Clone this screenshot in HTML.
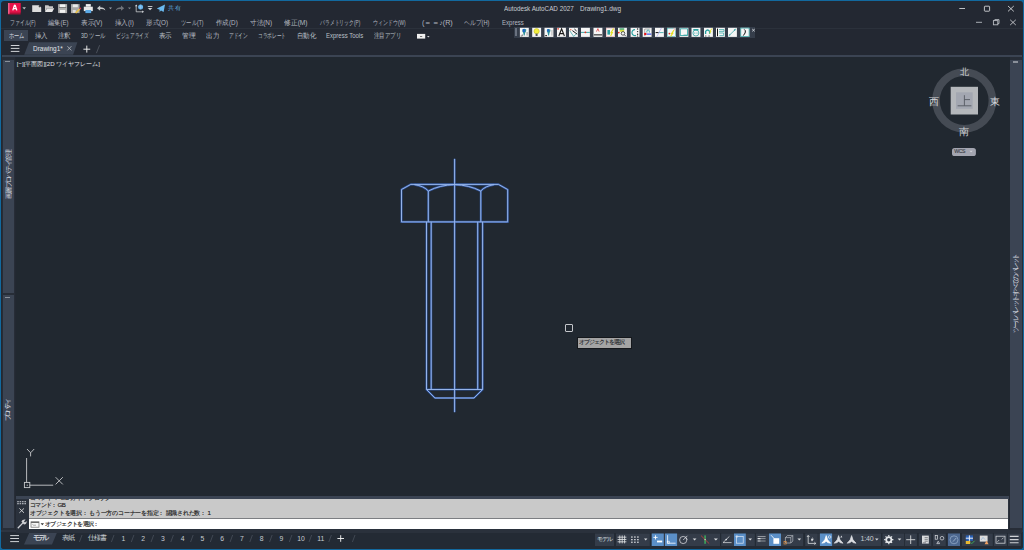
<!DOCTYPE html>
<html><head><meta charset="utf-8">
<style>
*{margin:0;padding:0;box-sizing:border-box}
html,body{width:1024px;height:550px;overflow:hidden;background:#12699f}
body{position:relative;font-family:"Liberation Sans",sans-serif;color:#c9ccd2}
.a{position:absolute}
.t{position:absolute;white-space:nowrap;line-height:1}
.mn{font-size:6.4px;color:#aeb2ba;top:20px;letter-spacing:-0.5px}
.rb{font-size:6.4px;color:#b4b8c0;top:32px;letter-spacing:-0.5px}
.vt{position:absolute;white-space:nowrap;line-height:1;font-size:6.2px;color:#d0d3d8;letter-spacing:-0.4px}
.cm{font-size:6px;color:#1e1e1e;letter-spacing:-0.3px}
svg{position:absolute;overflow:visible}
</style></head>
<body>

<div class="a" style="left:1px;top:1px;width:1022px;height:548px;background:#232832;border-radius:3px"></div>
<div class="a" style="left:1px;top:28px;width:1022px;height:1px;background:#2b313b"></div>
<svg style="left:0;top:0" width="200" height="18" viewBox="0 0 200 18">
<rect x="8" y="3" width="12.6" height="11.5" fill="#a80f35"/>
<rect x="8" y="3" width="12.6" height="9.6" fill="#e5134a"/>
<rect x="8" y="3" width="1.5" height="10.8" fill="#f0608a"/>
<path d="M12.8 10.4 L14.3 5.6 Q14.8 4.6 15.3 5.6 L16.8 10.4 M13.5 8.6 H16.1" stroke="#fff" stroke-width="1.3" fill="none" stroke-linejoin="round"/>
<path d="M22.4 7.2 H26 L24.2 9.4Z" fill="#b8bcc2"/>
<path d="M32.2 5.2 H38.8 L41.2 7.6 V12 H32.2Z" fill="#dcdcdc"/>
<circle cx="39.4" cy="6.6" r="0.8" fill="#444"/>
<path d="M45 5.2 H48.4 L49.2 6.2 H53 V8 H47 L45 12Z" fill="#c8c8c8"/>
<path d="M47 8.2 H54.2 L52.2 12 H45Z" fill="#e6e6e6"/>
<rect x="58.1" y="4.1" width="9" height="9" fill="#b0b0b0"/>
<rect x="60" y="4.4" width="5.2" height="2.8" fill="#f2f2f2"/>
<rect x="60" y="10" width="5.2" height="2.8" fill="#f2f2f2"/>
<rect x="59" y="7.4" width="7.2" height="0.6" fill="#555"/>
<rect x="71" y="4.1" width="8.6" height="9" fill="#a8a8a8"/>
<rect x="72.8" y="4.4" width="5" height="2.8" fill="#eaeaea"/>
<rect x="72.8" y="10" width="3" height="2.8" fill="#dcdcdc"/>
<path d="M75 12.4 L79 8.4 L80.3 9.6 L76.3 13.4Z" fill="#e8c24a"/>
<path d="M79 8.4 L80.2 7.2 L81.4 8.4 L80.3 9.6Z" fill="#d8334a"/>
<rect x="85.8" y="4.1" width="5" height="2.6" fill="#f0f0f0"/>
<rect x="83.8" y="6.7" width="9" height="4.4" fill="#e8e8e8"/>
<rect x="85.4" y="10" width="5.8" height="3.1" fill="#5aa9e6"/>
<path d="M97 8.2 L100.2 5.6 V7.2 Q104.6 7.2 105.4 10.4 Q103.6 8.8 100.2 9 V10.8Z" fill="#c8cacc"/>
<path d="M109 7.4 H112 L110.5 9.2Z" fill="#a0a4aa"/>
<path d="M124.2 8.2 L121 5.6 V7.2 Q116.6 7.2 115.8 10.4 Q117.6 8.8 121 9 V10.8Z" fill="#70747a"/>
<path d="M128 7.4 H131 L129.5 9.2Z" fill="#80848a"/>
<path d="M136.2 5.6 V11.8 H142.6" stroke="#dfe1e4" stroke-width="0.7" fill="none"/>
<path d="M135 6.2 L136.2 4.4 L137.4 6.2Z M142.2 10.6 L144 11.8 L142.2 13Z" fill="#dfe1e4"/>
<circle cx="140.6" cy="7" r="2.5" fill="#5fb0ec"/>
<path d="M138.4 7 H142.8 M140.6 4.6 V9.4" stroke="#b8dcf6" stroke-width="0.4" fill="none"/>
<rect x="147.8" y="6" width="4.6" height="0.9" fill="#d0d2d6"/>
<path d="M147.8 8 H152.4 L150.1 10.2Z" fill="#d0d2d6"/>
<path d="M156.8 8.6 L165 4.5 L163.6 12 L161 10.4 L159.6 12 L159.6 9.8Z" fill="#6ab9ef"/>
</svg>
<div class="t" style="left:167.8px;top:4.6px;font-size:6.4px;color:#5fa8dc;letter-spacing:0.712px;">共有</div>
<div class="t" style="left:503.8px;top:5px;font-size:7.2px;color:#c9ccd2;transform:scaleX(0.8757);transform-origin:0 0;">Autodesk AutoCAD 2027</div>
<div class="t" style="left:579.6px;top:5px;font-size:7.2px;color:#c9ccd2;transform:scaleX(0.9012);transform-origin:0 0;">Drawing1.dwg</div>
<svg style="left:940px;top:0" width="84" height="30" viewBox="0 0 84 30">
<path d="M19.3 8.5 H25" stroke="#d0d2d6" stroke-width="0.9"/>
<rect x="44.4" y="6.2" width="5.2" height="5" fill="none" stroke="#d0d2d6" stroke-width="0.9" rx="0.6"/>
<path d="M68 6 L73.8 11.4 M73.8 6 L68 11.4" stroke="#d0d2d6" stroke-width="0.9"/>
<path d="M36 22.3 H42" stroke="#b8bcc2" stroke-width="0.9"/>
<rect x="53.4" y="20.6" width="4.4" height="4.2" fill="none" stroke="#b8bcc2" stroke-width="0.9"/>
<path d="M54.8 20.6 V19.6 H59 V23.6 H57.8" fill="none" stroke="#b8bcc2" stroke-width="0.9"/>
<path d="M70.2 19.8 L75.8 25 M75.8 19.8 L70.2 25" stroke="#c8cace" stroke-width="0.9"/>
</svg>
<div class="t" style="left:10px;top:20.2px;font-size:6.8px;color:#b4b8c0;transform:scaleX(0.6999);transform-origin:0 0;">ファイル(F)</div>
<div class="t" style="left:48.2px;top:20.2px;font-size:6.8px;color:#b4b8c0;transform:scaleX(0.8891);transform-origin:0 0;">編集(E)</div>
<div class="t" style="left:81.4px;top:20.2px;font-size:6.8px;color:#b4b8c0;transform:scaleX(0.9293);transform-origin:0 0;">表示(V)</div>
<div class="t" style="left:114.6px;top:20.2px;font-size:6.8px;color:#b4b8c0;transform:scaleX(0.9270);transform-origin:0 0;">挿入(I)</div>
<div class="t" style="left:146.4px;top:20.2px;font-size:6.8px;color:#b4b8c0;transform:scaleX(0.9288);transform-origin:0 0;">形式(O)</div>
<div class="t" style="left:181px;top:20.2px;font-size:6.8px;color:#b4b8c0;transform:scaleX(0.7584);transform-origin:0 0;">ツール(T)</div>
<div class="t" style="left:215.6px;top:20.2px;font-size:6.8px;color:#b4b8c0;transform:scaleX(0.9272);transform-origin:0 0;">作成(D)</div>
<div class="t" style="left:250px;top:20.2px;font-size:6.8px;color:#b4b8c0;transform:scaleX(0.9447);transform-origin:0 0;">寸法(N)</div>
<div class="t" style="left:284.4px;top:20.2px;font-size:6.8px;color:#b4b8c0;transform:scaleX(0.9735);transform-origin:0 0;">修正(M)</div>
<div class="t" style="left:320.2px;top:20.2px;font-size:6.8px;color:#b4b8c0;transform:scaleX(0.6936);transform-origin:0 0;">パラメトリック(P)</div>
<div class="t" style="left:372.7px;top:20.2px;font-size:6.8px;color:#b4b8c0;transform:scaleX(0.7112);transform-origin:0 0;">ウィンドウ(W)</div>
<div class="t" style="left:421.5px;top:20.2px;font-size:6.8px;color:#b4b8c0;transform:scaleX(1.0552);transform-origin:0 0;">(＝＝♪(R)</div>
<div class="t" style="left:464.1px;top:20.2px;font-size:6.8px;color:#b4b8c0;transform:scaleX(0.8368);transform-origin:0 0;">ヘルプ(H)</div>
<div class="t" style="left:501.5px;top:20.2px;font-size:6.8px;color:#b4b8c0;transform:scaleX(0.8877);transform-origin:0 0;">Express</div>
<div class="a" style="left:4px;top:30px;width:24px;height:11px;background:#3b4453"></div>
<div class="t" style="left:8.8px;top:32.5px;font-size:6.8px;color:#dadde2;transform:scaleX(0.7382);transform-origin:0 0;">ホーム</div>
<div class="t" style="left:34.8px;top:32.5px;font-size:6.8px;color:#bcc0c8;transform:scaleX(0.9084);transform-origin:0 0;">挿入</div>
<div class="t" style="left:58px;top:32.5px;font-size:6.8px;color:#bcc0c8;transform:scaleX(0.9234);transform-origin:0 0;">注釈</div>
<div class="t" style="left:81px;top:32.5px;font-size:6.8px;color:#bcc0c8;transform:scaleX(0.7735);transform-origin:0 0;">3D ツール</div>
<div class="t" style="left:115.6px;top:32.5px;font-size:6.8px;color:#bcc0c8;transform:scaleX(0.6685);transform-origin:0 0;">ビジュアライズ</div>
<div class="t" style="left:158.9px;top:32.5px;font-size:6.8px;color:#bcc0c8;transform:scaleX(0.9234);transform-origin:0 0;">表示</div>
<div class="t" style="left:182px;top:32.5px;font-size:6.8px;color:#bcc0c8;transform:scaleX(0.9760);transform-origin:0 0;">管理</div>
<div class="t" style="left:205.5px;top:32.5px;font-size:6.8px;color:#bcc0c8;transform:scaleX(0.9384);transform-origin:0 0;">出力</div>
<div class="t" style="left:229px;top:32.5px;font-size:6.8px;color:#bcc0c8;transform:scaleX(0.6772);transform-origin:0 0;">アドイン</div>
<div class="t" style="left:258px;top:32.5px;font-size:6.8px;color:#bcc0c8;transform:scaleX(0.6655);transform-origin:0 0;">コラボレート</div>
<div class="t" style="left:296.6px;top:32.5px;font-size:6.8px;color:#bcc0c8;transform:scaleX(0.9252);transform-origin:0 0;">自動化</div>
<div class="t" style="left:326.3px;top:32.5px;font-size:6.8px;color:#bcc0c8;transform:scaleX(0.8818);transform-origin:0 0;">Express Tools</div>
<div class="t" style="left:373.9px;top:32.5px;font-size:6.8px;color:#bcc0c8;transform:scaleX(0.7809);transform-origin:0 0;">注目アプリ</div>
<svg style="left:410px;top:26px" width="30" height="16" viewBox="0 0 30 16">
<rect x="7" y="7.9" width="8.2" height="4.7" fill="#f0f0f0"/>
<rect x="10" y="10" width="2.2" height="0.8" fill="#555"/>
<path d="M17 10 H19.6 L18.3 11.5Z" fill="#d0d2d6"/>
</svg>
<div class="a" style="left:514px;top:26.9px;width:241px;height:10.9px;background:#353d4a"></div>
<div class="a" style="left:515.2px;top:28.2px;width:1.6px;height:8.2px;background:#6a7280"></div>
<svg style="left:0;top:0" width="1024" height="45" viewBox="0 0 1024 45"><rect x="519.9" y="27.8" width="8.9" height="9.1" fill="#f6f6f6"/><rect x="532.2" y="27.8" width="8.9" height="9.1" fill="#f6f6f6"/><rect x="544.5" y="27.8" width="8.9" height="9.1" fill="#f6f6f6"/><rect x="557" y="27.8" width="8.9" height="9.1" fill="#f6f6f6"/><rect x="569" y="27.8" width="8.9" height="9.1" fill="#f6f6f6"/><rect x="581" y="27.8" width="8.9" height="9.1" fill="#f6f6f6"/><rect x="593.5" y="27.8" width="8.9" height="9.1" fill="#f6f6f6"/><rect x="606" y="27.8" width="8.9" height="9.1" fill="#f6f6f6"/><rect x="618" y="27.8" width="8.9" height="9.1" fill="#f6f6f6"/><rect x="630.6" y="27.8" width="8.9" height="9.1" fill="#f6f6f6"/><rect x="642.7" y="27.8" width="8.9" height="9.1" fill="#f6f6f6"/><rect x="655" y="27.8" width="8.9" height="9.1" fill="#f6f6f6"/><rect x="667" y="27.8" width="8.9" height="9.1" fill="#f6f6f6"/><rect x="679.5" y="27.8" width="8.9" height="9.1" fill="#f6f6f6"/><rect x="691.5" y="27.8" width="8.9" height="9.1" fill="#f6f6f6"/><rect x="704" y="27.8" width="8.9" height="9.1" fill="#f6f6f6"/><rect x="716" y="27.8" width="8.9" height="9.1" fill="#f6f6f6"/><rect x="728" y="27.8" width="8.9" height="9.1" fill="#f6f6f6"/><rect x="740.5" y="27.8" width="8.9" height="9.1" fill="#f6f6f6"/><path d="M522.3 29.4 Q524.3 28 526.3 29.6 Q526.5 31.6 525.1 33 L524.6999999999999 35.6 H523.6999999999999 L523.3 33 Q521.9 31.4 522.3 29.4Z" fill="#2f8f9a"/><path d="M522.9 29.2 Q523.9 28.6 524.6999999999999 29.2 V32 H522.9Z" fill="#2060d0"/><path d="M520.6999999999999 36 H522.3 V34.4" stroke="#333" stroke-width="0.6" fill="none"/><rect x="526.3" y="32" width="2" height="3.6" fill="#bbb"/><circle cx="536.6" cy="31.2" r="2.6" fill="#f4f040" stroke="#c8c020" stroke-width="0.6"/><rect x="535.6" y="33.6" width="2" height="2.4" fill="#555"/><path d="M546.9 29.6 Q548.7 28.2 550.5 29.8 Q550.5 31.6 549.5 33 L549.1 35.6 H548.1 L547.7 33 Q546.5 31.4 546.9 29.6Z" fill="#2f8f9a"/><path d="M547.3 29.4 Q548.1 28.8 548.9 29.3 V31.6 H547.3Z" fill="#2060d0"/><rect x="545.3" y="35" width="1.6" height="1.2" fill="#222"/><rect x="551.1" y="30" width="1.6" height="5.6" fill="#ccc"/><path d="M558.8 36 L561.6 28.8 L564.4 36 M559.8 33.6 H563.4" stroke="#1a1a1a" stroke-width="1.1" fill="none"/><circle cx="558.1" cy="28.9" r="0.8" fill="#e83020"/><path d="M569.6 30.4 L573.6 36.4 L577.4 33" stroke="#2aa0a0" stroke-width="0.7" fill="none"/><path d="M572.4 30.6 L577.2 34.2 M574.4 29 L576.6 31" stroke="#1a1a1a" stroke-width="1" /><circle cx="570.8" cy="29.8" r="0.7" fill="#e86040"/><path d="M581 32.4 H589.9" stroke="#2aa0a0" stroke-width="0.9"/><circle cx="585.4" cy="32.3" r="0.9" fill="#e83020"/><path d="M596.5 31.6 L597.9 28.6 L599.1 31.6" stroke="#e02828" stroke-width="0.7" fill="none"/><rect x="593.9" y="34" width="8.2" height="1.6" fill="#666"/><rect x="606.3" y="28.1" width="8.3" height="8.5" fill="none" stroke="#e8a8a8" stroke-width="0.5"/><rect x="607.4" y="30" width="2.6" height="4.6" fill="#2aa0a0"/><path d="M613.6 28.6 L611 32.6 H612.4 L610.6 36" stroke="#e6e020" stroke-width="1.1" fill="none"/><rect x="619.6" y="28.4" width="4.6" height="3.4" fill="#d8e040"/><rect x="619.6" y="28.4" width="4.6" height="1.2" fill="#2aa0a0"/><circle cx="618.8" cy="32.6" r="0.9" fill="#e82020"/><circle cx="623" cy="33.4" r="1.8" fill="none" stroke="#333" stroke-width="0.8"/><path d="M624.3 34.7 L626 36.4" stroke="#333" stroke-width="0.9"/><path d="M635.0 29.6 A3 3 0 1 0 636.0 35.4" stroke="#2aa0a0" stroke-width="1.2" fill="none"/><circle cx="637.6" cy="29" r="0.7" fill="#222"/><circle cx="637.6" cy="31.6" r="0.7" fill="#222"/><circle cx="637.6" cy="34.2" r="0.7" fill="#222"/><circle cx="637.6" cy="36" r="0.6" fill="#222"/><path d="M644.7 36 V29 H650.3000000000001" stroke="#777" stroke-width="0.6" fill="none"/><path d="M646.9000000000001 32.6 V30.6 Q648.1 29.4 649.3000000000001 30.6 V32.6" stroke="#2aa0a0" stroke-width="0.8" fill="none"/><circle cx="645.3000000000001" cy="34" r="1.3" fill="#e81818"/><rect x="646.7" y="33.6" width="4.6" height="1" fill="#1830e0"/><path d="M655.6 32.6 H658.6" stroke="#111" stroke-width="1"/><path d="M659.2 32.6 H663.6" stroke="#2aa0a0" stroke-width="0.8"/><path d="M656.8 36.6 L661.4 28" stroke="#8a8af0" stroke-width="0.5"/><rect x="667.4" y="28.2" width="8.1" height="8.3" fill="none" stroke="#2aa0a0" stroke-width="0.5"/><path d="M673 28.2 H675.5 V31" fill="#f0b8b8"/><circle cx="669.4" cy="33.6" r="0.9" fill="#e83020"/><path d="M674 30.2 L671.6 33.4 H672.8 L670.6 36.4" stroke="#e6e020" stroke-width="1.1" fill="none"/><rect x="680.3" y="28.8" width="7.3" height="6.6" fill="none" stroke="#2aa0a0" stroke-width="0.8"/><path d="M683.5 35 H687.5" stroke="#2aa0a0" stroke-width="0.6"/><circle cx="695.9" cy="33" r="3" fill="none" stroke="#2aa0a0" stroke-width="0.8"/><rect x="693.3" y="29" width="5.2" height="1.4" fill="#2aa0a0"/><circle cx="694.8" cy="33" r="0.6" fill="#2aa0a0"/><circle cx="697.0" cy="33" r="0.6" fill="#2aa0a0"/><path d="M705.6 34 V31.4 Q707.6 28.6 709.6 31.4 V34" stroke="#2aa0a0" stroke-width="1.3" fill="none"/><path d="M712 28.4 L710 31.4 H711 L709.6 33.6" stroke="#e6e020" stroke-width="0.9" fill="none"/><path d="M705 36 H706.4 M708.4 36 H709.8" stroke="#333" stroke-width="0.8"/><rect x="717" y="28.6" width="1" height="7.6" fill="#111"/><path d="M719 29.6 H724 V31.4 H719 M719 33 H723.6 V35.6 H719.4" stroke="#2aa0a0" stroke-width="0.7" fill="none"/><path d="M728.6 36 L736 28.8" stroke="#2aa0a0" stroke-width="0.7"/><circle cx="734.6" cy="30" r="0.8" fill="#2aa0a0"/><circle cx="729.8" cy="34.8" r="0.6" fill="#2aa0a0"/><rect x="740.8" y="28.1" width="8.3" height="8.5" fill="none" stroke="#2aa0a0" stroke-width="0.7"/><path d="M744.3 29.4 Q746.1 30.4 745.1 33 L743.3 35.6" stroke="#111" stroke-width="1" fill="none"/><circle cx="744.5" cy="29.4" r="0.6" fill="#888"/><path d="M752.2 29 L754.8 31.4 M754.8 29 L752.2 31.4" stroke="#e0e2e6" stroke-width="0.8"/></svg>
<div class="a" style="left:2px;top:55px;width:1020px;height:2.2px;background:#3b4453"></div>
<svg style="left:0;top:38px" width="120" height="20" viewBox="0 0 120 20">
<path d="M24.2 16.8 L29 4.3 H77.4 L73.1 16.8Z" fill="#3b4453"/>
<path d="M10.8 7.5 H19.4 M10.8 10.4 H19.4 M10.8 13.4 H19.4" stroke="#e4e6ea" stroke-width="0.9"/>
<path d="M67.4 8.2 L71.4 12.4 M71.4 8.2 L67.4 12.4" stroke="#b8bcc2" stroke-width="0.8"/>
<path d="M83.4 11.2 H90.2 M86.8 7.6 V14.6" stroke="#f0f0f0" stroke-width="0.95"/>
<path d="M99.6 7.2 L96.4 15.2" stroke="#5a606a" stroke-width="0.7"/>
</svg>
<div class="t" style="left:33.3px;top:45.2px;font-size:7px;color:#e0e3e8;transform:scaleX(0.9210);transform-origin:0 0;">Drawing1*</div>
<div class="a" style="left:15.5px;top:57.2px;width:994.5px;height:439px;background:#212830"></div>
<div class="a" style="left:2px;top:57.2px;width:13px;height:473px;background:#272d37"></div>
<div class="a" style="left:2.6px;top:59.8px;width:11.8px;height:233px;background:#3b4453"></div>
<div class="a" style="left:2.6px;top:294.8px;width:11.8px;height:233.5px;background:#3b4453"></div>
<div class="a" style="left:5px;top:61.2px;width:5px;height:1.2px;background:#8a909a"></div>
<div class="a" style="left:5px;top:296.6px;width:5px;height:1.2px;background:#8a909a"></div>
<div class="a" style="left:1010px;top:57.2px;width:12.5px;height:473px;background:#272d37"></div>
<div class="a" style="left:1010px;top:59.9px;width:12px;height:468.5px;background:#3b4453"></div>
<div class="a" style="left:1013px;top:61.4px;width:5.4px;height:1.2px;background:#8a909a"></div>
<div class="t vt" style="left:8.5px;top:175.3px;font-size:6.6px;color:#d8dbe0;letter-spacing:-1.684px;transform:translate(-50%,-50%) rotate(-90deg)">画層プロパティ管理</div>
<div class="t vt" style="left:8.2px;top:411px;font-size:6.6px;color:#d8dbe0;letter-spacing:-2.893px;transform:translate(-50%,-50%) rotate(-90deg)">プロパティ</div>
<div class="t vt" style="left:1015.8px;top:293.6px;font-size:6.6px;color:#d8dbe0;letter-spacing:-1.785px;transform:translate(-50%,-50%) rotate(-90deg)">ツールパレット - すべてのパレット</div>
<div class="t" style="left:16.8px;top:61.4px;font-size:6.1px;color:#e0e2e6;letter-spacing:-0.006px;">[−][平面図][2D ワイヤフレーム]</div>
<svg style="left:0;top:0" width="1024" height="550" viewBox="0 0 1024 550">
<g stroke="#3560b4" stroke-width="2.1" fill="none" opacity="0.8"><path d="M454.6 158.8 V412.2"/>
<path d="M401.5 189.5 L410.8 184.4 H498.4 L507.7 189.5 V221.9 H401.5Z"/>
<path d="M428.3 191 V221.9 M480.8 191 V221.9"/>
<path d="M414.4 184.6 Q424 186 428.3 191 Q440 185 454.4 184.6 Q469 185 480.8 191 Q485 186 494.2 184.6"/>
<path d="M426.5 221.9 V389.5 L434.9 398 H474 L482.6 389.5 V221.9"/>
<path d="M431.2 221.9 V389.5 M477.7 221.9 V389.5 M426.5 389.5 H482.6"/></g>
<g stroke="#9ab8ee" stroke-width="0.95" fill="none"><path d="M454.6 158.8 V412.2"/>
<path d="M401.5 189.5 L410.8 184.4 H498.4 L507.7 189.5 V221.9 H401.5Z"/>
<path d="M428.3 191 V221.9 M480.8 191 V221.9"/>
<path d="M414.4 184.6 Q424 186 428.3 191 Q440 185 454.4 184.6 Q469 185 480.8 191 Q485 186 494.2 184.6"/>
<path d="M426.5 221.9 V389.5 L434.9 398 H474 L482.6 389.5 V221.9"/>
<path d="M431.2 221.9 V389.5 M477.7 221.9 V389.5 M426.5 389.5 H482.6"/></g>
</svg>
<svg style="left:900px;top:55px" width="110" height="110" viewBox="900 55 110 110">
<circle cx="964.2" cy="100.5" r="28.2" fill="none" stroke="#454b54" stroke-width="7.6"/>
<rect x="950.7" y="86.8" width="27.3" height="27.7" fill="#b4b7bb"/>
<rect x="956" y="92.3" width="16.7" height="16.5" fill="#a3a7b1"/>
<path d="M957.6 105.8 H971.4 M964.4 95.2 V105.8 M964.4 99.6 H970" stroke="#555a62" stroke-width="0.9"/>
<rect x="952" y="147.9" width="23.9" height="8.2" rx="2.6" fill="#a3a5b0"/>
</svg>
<div class="t" style="left:959.9px;top:68.2px;font-size:8.8px;color:#d2d4d8">北</div>
<div class="t" style="left:929px;top:96.8px;font-size:9.6px;color:#d2d4d8">西</div>
<div class="t" style="left:990px;top:96.6px;font-size:9.6px;color:#d2d4d8">東</div>
<div class="t" style="left:959px;top:126.6px;font-size:9.6px;color:#d2d4d8">南</div>
<div class="t" style="left:954.2px;top:149.3px;font-size:5.2px;color:#3a3d44;letter-spacing:-0.397px;-webkit-text-stroke:0.1px #3a3d44">WCS</div>
<svg style="left:0;top:0" width="1024" height="200" viewBox="0 0 1024 200"><path d="M969.4 150.8 H972.8 L971.1 152.2Z" fill="#d4d6dc"/></svg>
<div class="a" style="left:565.1px;top:324.3px;width:7.5px;height:7.5px;border:1px solid #c4c6ca;border-radius:1px"></div>
<div class="a" style="left:577.4px;top:337.2px;width:54.8px;height:11.9px;background:#a4a4a4;border:0.8px solid #15181c"></div>
<div class="t" style="left:578.9px;top:339px;font-size:6.2px;color:#26282c;letter-spacing:-1.013px;-webkit-text-stroke:0.12px #26282c">オブジェクトを選択</div>
<svg style="left:0;top:440px" width="80" height="60" viewBox="0 440 80 60">
<g stroke="#c8cacd" stroke-width="0.9" fill="none">
<path d="M26.6 458 V482.6 M29.6 485.2 H53.2"/>
<rect x="24.4" y="482.4" width="5.4" height="5.2"/>
<path d="M27 449 L30.6 452.8 L34.2 449 M30.6 452.8 V456.4"/>
<path d="M55.6 477.2 L62.8 484.4 M62.8 477.2 L55.6 484.4"/>
<path d="M26.6 485.2 H28"/>
</g></svg>
<div class="a" style="left:15.5px;top:496px;width:993.5px;height:34px;background:#2a313c"></div>
<div class="a" style="left:15.5px;top:496px;width:993.5px;height:2.8px;background:#3b4453"></div>
<div class="a" style="left:29px;top:498.8px;width:979px;height:19px;background:#c9c9c9"></div>
<div class="a" style="left:29px;top:517.9px;width:979px;height:1.1px;background:#7c7e82"></div>
<div class="a" style="left:29px;top:519px;width:979px;height:10.4px;background:#ffffff"></div>
<div class="a" style="left:29px;top:498.8px;width:979px;height:19px;overflow:hidden"><div class="t" style="left:0.8px;top:-4.1px;font-size:6.2px;color:#1e1e1e;letter-spacing:-0.2px;-webkit-text-stroke:0.15px #1e1e1e">コマンド： GB  ガイドブロック 一 ・</div></div>
<div class="t" style="left:29.9px;top:501.8px;font-size:6.2px;color:#1e1e1e;letter-spacing:-0.682px;-webkit-text-stroke:0.15px #1e1e1e">コマンド： GB</div>
<div class="t" style="left:29.9px;top:510px;font-size:6.2px;color:#1e1e1e;letter-spacing:-0.228px;-webkit-text-stroke:0.15px #1e1e1e">オブジェクトを選択： もう一方のコーナーを指定： 認識された数： 1</div>
<div class="t" style="left:45px;top:520.8px;font-size:6.2px;color:#222222;letter-spacing:-0.612px;-webkit-text-stroke:0.15px #222">オブジェクトを選択：</div>
<svg style="left:0;top:490px" width="60" height="45" viewBox="0 490 60 45">
<g fill="#a8acb4">
<rect x="17.2" y="501" width="1.6" height="1.3"/><rect x="19.6" y="501" width="1.6" height="1.3"/><rect x="22" y="501" width="1.6" height="1.3"/><rect x="24.4" y="501" width="1.6" height="1.3"/>
<rect x="17.2" y="503" width="1.6" height="1.3"/><rect x="19.6" y="503" width="1.6" height="1.3"/><rect x="22" y="503" width="1.6" height="1.3"/><rect x="24.4" y="503" width="1.6" height="1.3"/>
</g>
<path d="M19.4 508.4 L24 512.8 M24 508.4 L19.4 512.8" stroke="#d8dadd" stroke-width="0.9"/>
<path d="M17.8 528.2 L23.4 522.4" stroke="#d0d2d6" stroke-width="1.3"/>
<path d="M21.4 521.6 Q22.4 519 25.6 519.6 L24 521.4 L25 522.6 L26.6 521 Q27 524.4 24 524.6" fill="#d0d2d6"/>
<rect x="31" y="521.8" width="8" height="5.4" fill="#f6f6f6" stroke="#6a6a6a" stroke-width="0.7"/>
<rect x="31" y="521.8" width="8" height="1.2" fill="#6a6a6a"/>
<path d="M32.4 524.4 L33.6 525.2 H36" stroke="#555" stroke-width="0.5" fill="none"/>
<path d="M40.6 523.2 H44 L42.3 525.2Z" fill="#333"/>
</svg>
<div class="a" style="left:1px;top:530.2px;width:1022px;height:2.2px;background:#2e3541"></div>
<div class="a" style="left:1px;top:532.4px;width:1022px;height:16.6px;background:#232a34;border-radius:0 0 3px 3px"></div>
<svg style="left:0;top:525px" width="370" height="25" viewBox="0 525 370 25">
<path d="M10.2 535.6 H19 M10.2 538.5 H19 M10.2 541.6 H19" stroke="#e4e6ea" stroke-width="0.9"/>
<path d="M24 544.5 L29.4 532.4 H57 L52 544.5Z" fill="#3b4453"/>
<g stroke="#4e5560" stroke-width="0.7">
<path d="M82 535 L79.4 542"/><path d="M114 535 L111.4 542"/>

<path d="M133.9 535 L131.3 542"/>
<path d="M153.65 535 L151.05 542"/>
<path d="M173.4 535 L170.8 542"/>
<path d="M193.15 535 L190.55 542"/>
<path d="M212.9 535 L210.3 542"/>
<path d="M232.65 535 L230.05 542"/>
<path d="M252.4 535 L249.8 542"/>
<path d="M272.15 535 L269.55 542"/>
<path d="M291.9 535 L289.3 542"/>
<path d="M311.65 535 L309.05 542"/>
<path d="M331.4 535 L328.8 542"/>
<path d="M355 535 L352.4 542"/>
</g><path d="M337.4 538.5 H344 M340.7 535.2 V541.8" stroke="#f0f0f0" stroke-width="0.95"/></svg>
<div class="t" style="left:33.2px;top:534.8px;font-size:6.8px;color:#e6e8ec;letter-spacing:-2.378px;-webkit-text-stroke:0.1px #e6e8ec">モデル</div>
<div class="t" style="left:62px;top:534.8px;font-size:6.8px;color:#c8ccd2;letter-spacing:-1.256px;">表紙</div>
<div class="t" style="left:87.6px;top:534.8px;font-size:6.8px;color:#c8ccd2;letter-spacing:-1.028px;">仕様書</div>
<div class="t" style="left:103.3px;width:40px;text-align:center;top:535.8px;font-size:6.8px;color:#c8ccd2">1</div>
<div class="t" style="left:123.05000000000001px;width:40px;text-align:center;top:535.8px;font-size:6.8px;color:#c8ccd2">2</div>
<div class="t" style="left:142.8px;width:40px;text-align:center;top:535.8px;font-size:6.8px;color:#c8ccd2">3</div>
<div class="t" style="left:162.55px;width:40px;text-align:center;top:535.8px;font-size:6.8px;color:#c8ccd2">4</div>
<div class="t" style="left:182.3px;width:40px;text-align:center;top:535.8px;font-size:6.8px;color:#c8ccd2">5</div>
<div class="t" style="left:202.05px;width:40px;text-align:center;top:535.8px;font-size:6.8px;color:#c8ccd2">6</div>
<div class="t" style="left:221.8px;width:40px;text-align:center;top:535.8px;font-size:6.8px;color:#c8ccd2">7</div>
<div class="t" style="left:241.55px;width:40px;text-align:center;top:535.8px;font-size:6.8px;color:#c8ccd2">8</div>
<div class="t" style="left:261.3px;width:40px;text-align:center;top:535.8px;font-size:6.8px;color:#c8ccd2">9</div>
<div class="t" style="left:281.05px;width:40px;text-align:center;top:535.8px;font-size:6.8px;color:#c8ccd2">10</div>
<div class="t" style="left:300.8px;width:40px;text-align:center;top:535.8px;font-size:6.8px;color:#c8ccd2">11</div>
<div class="a" style="left:15.5px;top:530px;width:1006px;height:3px;background:#2a313c"></div>
<svg style="left:580px;top:525px" width="444" height="25" viewBox="580 525 444 25"><rect x="595" y="533.5" width="19.00" height="12.5" fill="#343c49"/><rect x="616" y="533.5" width="33.80" height="12.5" fill="#343c49"/><rect x="651.7" y="533.5" width="68.30" height="12.5" fill="#343c49"/><rect x="721.2" y="533.5" width="33.60" height="12.5" fill="#343c49"/><rect x="756" y="533.5" width="47.20" height="12.5" fill="#343c49"/><rect x="805.2" y="533.5" width="12.50" height="12.5" fill="#343c49"/><rect x="818.4" y="533.5" width="62.60" height="12.5" fill="#343c49"/><rect x="882.5" y="533.5" width="21.50" height="12.5" fill="#343c49"/><rect x="904.8" y="533.5" width="12.10" height="12.5" fill="#343c49"/><rect x="918.8" y="533.5" width="12.50" height="12.5" fill="#343c49"/><rect x="932.9" y="533.5" width="12.90" height="12.5" fill="#343c49"/><rect x="947.9" y="533.5" width="12.10" height="12.5" fill="#343c49"/><rect x="962" y="533.5" width="30.80" height="12.5" fill="#343c49"/><rect x="994" y="533.5" width="12.90" height="12.5" fill="#343c49"/><rect x="1008" y="533.5" width="12.90" height="12.5" fill="#343c49"/><rect x="651.7" y="533.5" width="12.10" height="12.5" fill="#5b8fc7"/><rect x="665" y="533.5" width="12.10" height="12.5" fill="#5b8fc7"/><rect x="734" y="533.5" width="11.80" height="12.5" fill="#5b8fc7"/><rect x="769" y="533.5" width="12.00" height="12.5" fill="#5b8fc7"/><rect x="820" y="533.5" width="12.10" height="12.5" fill="#5b8fc7"/><rect x="947.9" y="533.5" width="12.1" height="12.5" fill="#4d6890"/><g stroke="#e6e8ea" stroke-width="0.8"><path d="M619.8 535.4 V543.4 M622.2 535.4 V543.4 M624.6 535.4 V543.4 M617.6 537.2 H626.4 M617.6 539.5 H626.4 M617.6 541.8 H626.4"/></g><rect x="631.2" y="536.4" width="1.4" height="1.3" fill="#e6e8ea"/><rect x="631.2" y="539.0" width="1.4" height="1.3" fill="#e6e8ea"/><rect x="631.2" y="541.6" width="1.4" height="1.3" fill="#e6e8ea"/><rect x="634.2" y="536.4" width="1.4" height="1.3" fill="#e6e8ea"/><rect x="634.2" y="539.0" width="1.4" height="1.3" fill="#e6e8ea"/><rect x="634.2" y="541.6" width="1.4" height="1.3" fill="#e6e8ea"/><rect x="637.2" y="536.4" width="1.4" height="1.3" fill="#e6e8ea"/><rect x="637.2" y="539.0" width="1.4" height="1.3" fill="#e6e8ea"/><rect x="637.2" y="541.6" width="1.4" height="1.3" fill="#e6e8ea"/><path d="M644 538.6 H647.4 L645.7 540.6Z" fill="#d8dadd"/><path d="M653.4 537.4 H657.6 M655.5 535.3 V539.5" stroke="#fff" stroke-width="0.9"/><rect x="657" y="540.6" width="5.2" height="1.8" fill="#fff"/><path d="M667.6 535.2 V543.2 H675.6" stroke="#fff" stroke-width="0.8" fill="none"/><rect x="667.2" y="541.2" width="2" height="2" fill="none" stroke="#fff" stroke-width="0.6"/><circle cx="683.2" cy="540" r="3.6" fill="none" stroke="#d4d6da" stroke-width="0.8"/><path d="M683.2 540 L687.4 535.8 M685.4 537.6 L687.6 539.4" stroke="#d4d6da" stroke-width="0.8"/><path d="M692.7 538.6 H696.5 L694.6 540.6Z" fill="#d8dadd"/><rect x="704.2" y="535.4" width="1.8" height="8.4" fill="#3a9a5a"/><path d="M701 535.6 L709.2 543.6" stroke="#c8443a" stroke-width="0.8"/><circle cx="705.1" cy="539.6" r="0.7" fill="#ddd"/><path d="M713.8 538.6 H717.9 L715.8499999999999 540.6Z" fill="#d8dadd"/><path d="M723 542.6 H731.6 M723 542.6 L729.4 536.4" stroke="#e6e8ea" stroke-width="0.7" fill="none"/><circle cx="726.2" cy="539.6" r="0.8" fill="#e6e8ea"/><rect x="736.6" y="536.4" width="6.6" height="6.8" fill="none" stroke="#dfe8f4" stroke-width="0.7"/><circle cx="736.8" cy="536.5" r="1" fill="none" stroke="#dfe8f4" stroke-width="0.5"/><path d="M748.4 538.6 H752 L750.2 540.6Z" fill="#d8dadd"/><path d="M757.6 536.6 H765.6" stroke="#e6e8ea" stroke-width="0.6"/><path d="M757.6 538.6 H760.6 M757.6 541 H760.6" stroke="#e6e8ea" stroke-width="1.1"/><path d="M760.6 538.6 H765.6 M760.6 541 H765.6" stroke="#e6e8ea" stroke-width="0.5"/><rect x="773.4" y="538.2" width="5.8" height="5.6" fill="#fff"/><path d="M771 535.2 L774 538.4" stroke="#fff" stroke-width="0.8"/><path d="M785.4 537.6 L787.4 535.6 H792.8 V541 L790.8 543 H785.4Z M785.4 537.6 H790.8 V543 M790.8 537.6 L792.8 535.6" fill="none" stroke="#cfd2d6" stroke-width="0.6"/><rect x="784" y="541.6" width="2.2" height="2.4" fill="none" stroke="#e09040" stroke-width="0.7"/><path d="M797.4 538.6 H801.2 L799.3 540.6Z" fill="#d8dadd"/><path d="M808.2 535.6 V543.4 H815.6 M807 537 L808.2 535.4 L809.4 537 M814.4 542.2 L815.8 543.4 L814.4 544.6" fill="none" stroke="#e6e8ea" stroke-width="0.75"/><path d="M811 539.8 L812.6 537 L812.4 539.2 L814 538.4 L812 541.4" fill="#e6e8ea"/><path d="M826.2 535.6 L827.6 539.8 L830.6 543.2 L827.6 542.6 L826.2 541.2 L824.8000000000001 542.6 L821.8000000000001 543.2 L824.8000000000001 539.8Z" fill="#fff" stroke="#fff" stroke-width="0.7" stroke-linejoin="round"/><circle cx="829.6" cy="537" r="1.3" fill="none" stroke="#fff" stroke-width="0.6"/><path d="M838.6 535.6 L840.0 539.8 L843.0 543.2 L840.0 542.6 L838.6 541.2 L837.2 542.6 L834.2 543.2 L837.2 539.8Z" fill="#dcdee2" stroke="#dcdee2" stroke-width="0.7" stroke-linejoin="round"/><path d="M841.2 535.4 L842.4 537.2 L840.4 537.8Z" fill="#dcdee2"/><path d="M851.6 535.6 L853.0 539.8 L856.0 543.2 L853.0 542.6 L851.6 541.2 L850.2 542.6 L847.2 543.2 L850.2 539.8Z" fill="#dcdee2" stroke="#dcdee2" stroke-width="0.7" stroke-linejoin="round"/><path d="M875 538.6 H878.6 L876.8 540.6Z" fill="#d8dadd"/><circle cx="888.8" cy="539.7" r="2.6" fill="none" stroke="#e6e8ea" stroke-width="1.8"/><path d="M892.00 539.70 L893.40 539.70" stroke="#e6e8ea" stroke-width="1.2"/><path d="M891.06 541.96 L892.05 542.95" stroke="#e6e8ea" stroke-width="1.2"/><path d="M888.80 542.90 L888.80 544.30" stroke="#e6e8ea" stroke-width="1.2"/><path d="M886.54 541.96 L885.55 542.95" stroke="#e6e8ea" stroke-width="1.2"/><path d="M885.60 539.70 L884.20 539.70" stroke="#e6e8ea" stroke-width="1.2"/><path d="M886.54 537.44 L885.55 536.45" stroke="#e6e8ea" stroke-width="1.2"/><path d="M888.80 536.50 L888.80 535.10" stroke="#e6e8ea" stroke-width="1.2"/><path d="M891.06 537.44 L892.05 536.45" stroke="#e6e8ea" stroke-width="1.2"/><path d="M897.6 538.6 H901.4 L899.5 540.6Z" fill="#d8dadd"/><path d="M906.2 539.7 H915.2 M910.7 535.4 V544" stroke="#d8dadd" stroke-width="0.9"/><rect x="922" y="535.6" width="6.8" height="8" fill="#d8dadc"/><path d="M924.6 537.6 H927.8 M924.6 539.4 H927.8 M924.6 541.2 H927.8 M922.8 542.8 H926" stroke="#4a4e55" stroke-width="0.6"/><rect x="935.2" y="535.4" width="2.4" height="3.8" fill="none" stroke="#dcdee2" stroke-width="0.7"/><circle cx="942" cy="538.2" r="1.8" fill="none" stroke="#dcdee2" stroke-width="0.7"/><path d="M936.8 543.6 L938.2 541.2 L939.6 543.6Z" fill="none" stroke="#dcdee2" stroke-width="0.7"/><circle cx="954" cy="539.8" r="4" fill="none" stroke="#8ea6c4" stroke-width="0.8"/><path d="M953 541.6 L956.2 538" stroke="#b8c8dc" stroke-width="0.7"/><rect x="965.8" y="535.4" width="7.2" height="5.4" fill="#2a62b8"/><path d="M969.4 535.4 V540.8 M965.8 538.2 H973" stroke="#e8eef8" stroke-width="1"/><rect x="965.8" y="541" width="4.4" height="3" fill="#e8b830"/><path d="M970.6 542.4 L971.8 543.6 L974.6 540.8" stroke="#3cb45a" stroke-width="0.9" fill="none"/><rect x="979.8" y="535.6" width="7.8" height="6" fill="#dcdcdc"/><path d="M981 540 L983 537.4 L985 539.6" stroke="#6aa0d8" stroke-width="0.5" fill="none"/><path d="M984.6 544.2 L986.6 540.6 L988.6 544.2Z" fill="#f0a060"/><rect x="996" y="536.2" width="9" height="7" fill="none" stroke="#cfd2d6" stroke-width="0.8"/><path d="M997.4 541.8 L999.2 540 M1003.6 537.6 L1001.8 539.4" stroke="#cfd2d6" stroke-width="0.8"/><path d="M1009.8 536.4 H1018.6 M1009.8 539.6 H1018.6 M1009.8 542.8 H1018.6" stroke="#cfd2d6" stroke-width="1.1"/></svg>
<div class="t" style="left:597.2px;top:535.6px;font-size:6.2px;color:#dfe2e6;letter-spacing:-1.202px;">モデル</div>
<div class="t" style="left:860.6px;top:535.4px;font-size:7px;color:#c8ccd2;letter-spacing:-0.222px;">1:40</div>
</body></html>
